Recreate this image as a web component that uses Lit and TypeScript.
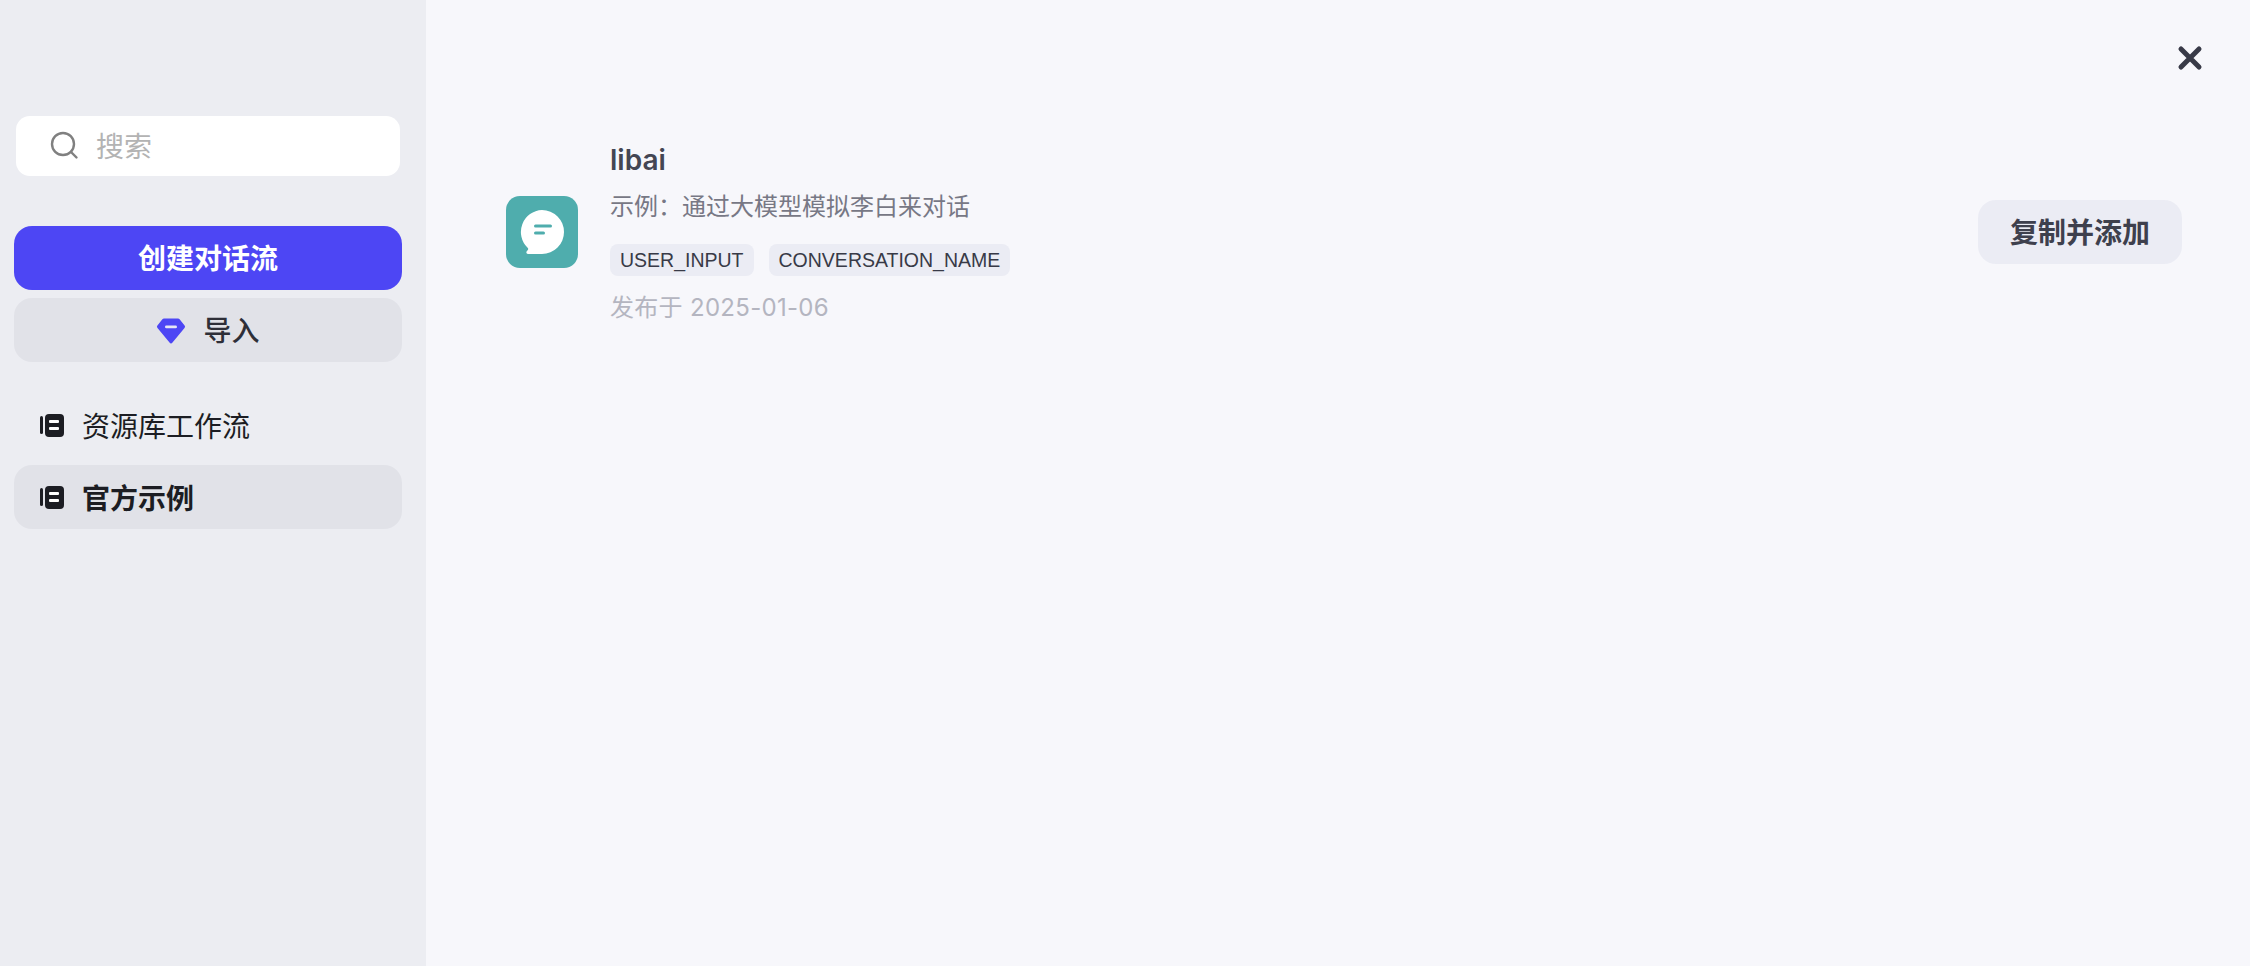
import { css, html, LitElement } from "lit";
import { customElement } from "lit/decorators.js";

const bookIcon = html`<svg class="nav-icon" width="26" height="26" viewBox="0 0 26 26">
  <rect x="1" y="4" width="3" height="18" rx="1.5" fill="#1c1d23"></rect>
  <rect x="6" y="2" width="19" height="23" rx="4" fill="#1c1d23"></rect>
  <rect x="10" y="8" width="10" height="3" rx="1" fill="#fff"></rect>
  <rect x="10" y="15" width="10" height="3" rx="1" fill="#fff"></rect>
</svg>`;

@customElement("app-root")
//@ts-ignore
class AppRoot extends LitElement {
    render() {
        return html`<div class="page">
      <aside class="sidebar">
        <div class="search">
          <svg width="30" height="30" viewBox="0 0 30 30" fill="none" stroke="#808080" stroke-width="2.4" stroke-linecap="round">
            <circle cx="14" cy="14" r="11"></circle>
            <path d="M22 22l5.5 5.5"></path>
          </svg>
          <span>搜索</span>
        </div>
        <button class="btn primary">创建对话流</button>
        <button class="btn import">
          <svg width="30" height="28" viewBox="0 0 30 28">
            <path d="M8 1.5h14a2 2 0 0 1 1.6.8l5 6.2a2 2 0 0 1-.1 2.6L16.5 25.6a2 2 0 0 1-3 0L1.500 11.100a2 2 0 0 1-.1-2.600l5-6.200A2 2 0 0 1 8 1.500z" fill="#4d46f4"></path>
            <rect x="9" y="8.500" width="12" height="2.800" rx="1.400" fill="#e6e6f5"></rect>
          </svg>
          <span>导入</span>
        </button>
        <nav class="nav">
          <div class="nav-item">${bookIcon}<span>资源库工作流</span></div>
          <div class="nav-item active">${bookIcon}<span>官方示例</span></div>
        </nav>
      </aside>
      <main class="main">
        <svg class="close" width="26" height="26" viewBox="0 0 26 26" fill="none" stroke="#383a47" stroke-width="5" stroke-linecap="round">
          <path d="M4 4l18 18M22 4L4 22"></path>
        </svg>
        <div class="row">
          <div class="app-icon">
            <svg width="44" height="44" viewBox="0 0 44 44">
              <path d="M22 0a22 22 0 1 1 0 44H8c-1.500 0-2.200-1.700-1.200-2.800l1-1.100c.6-.7.5-1.700-.2-2.300A22 22 0 0 1 22 0z" fill="#fff"></path>
              <rect x="14" y="14.500" width="18" height="3" rx="1.500" fill="#4fadad"></rect>
              <rect x="14" y="21.500" width="11" height="3" rx="1.500" fill="#4fadad"></rect>
            </svg>
          </div>
          <div class="info">
            <div class="title">libai</div>
            <div class="desc">示例：通过大模型模拟李白来对话</div>
            <div class="tags">
              <span class="tag">USER_INPUT</span>
              <span class="tag">CONVERSATION_NAME</span>
            </div>
            <div class="date">发布于 2025-01-06</div>
          </div>
          <button class="copy">复制并添加</button>
        </div>
      </main>
    </div>`;
    }

    static styles = css`
      :host {
        display: block;
        font-family: Inter, "Noto Sans CJK SC", sans-serif;
      }
      .page {
        display: flex;
        height: 966px;
        background: #f7f7fb;
      }
      .sidebar {
        width: 426px;
        flex: none;
        box-sizing: border-box;
        background: #ecedf2;
        padding: 116px 24px 0 14px;
        display: flex;
        flex-direction: column;
      }
      .search {
        display: flex;
        align-items: center;
        gap: 17px;
        height: 60px;
        box-sizing: border-box;
        margin: 0 2px 50px 2px;
        padding: 0 0 2px 33px;
        background: #fff;
        border-radius: 14px;
        font-size: 28px;
        color: #b3b3b3;
      }
      .btn {
        display: flex;
        align-items: center;
        justify-content: center;
        height: 64px;
        box-sizing: border-box;
        border: 0;
        border-radius: 18px;
        font-family: inherit;
        font-size: 28px;
        padding: 0 0 2px;
      }
      .primary {
        background: #4d46f4;
        color: #fff;
        font-weight: 700;
        margin-bottom: 8px;
      }
      .import {
        gap: 17px;
        background: #e1e2e8;
        color: #2e2f38;
        font-weight: 500;
      }
      .import svg {
        margin-top: 4px;
      }
      .nav {
        display: flex;
        flex-direction: column;
        gap: 8px;
        margin-top: 31px;
      }
      .nav-item {
        display: flex;
        align-items: center;
        gap: 17px;
        height: 64px;
        padding-left: 25px;
        border-radius: 18px;
        font-size: 28px;
        color: #1c1d23;
      }
      .nav-item.active {
        background: #e1e2e8;
        font-weight: 700;
      }
      .nav-icon {
        flex: none;
      }
      .main {
        flex: 1;
        position: relative;
        padding: 139px 68px 0 80px;
      }
      .close {
        position: absolute;
        top: 45px;
        right: 47px;
      }
      .row {
        display: flex;
        align-items: center;
        gap: 32px;
      }
      .app-icon {
        width: 72px;
        height: 72px;
        flex: none;
        display: flex;
        align-items: center;
        justify-content: center;
        background: #4fadad;
        border-radius: 14px;
      }
      .info {
        flex: 1;
        display: flex;
        flex-direction: column;
        align-items: flex-start;
        padding-top: 1px;
      }
      .title {
        font-size: 28px;
        line-height: 40px;
        font-weight: 600;
        color: #444653;
      }
      .desc {
        margin-top: 8px;
        font-size: 24px;
        line-height: 38px;
        color: #777885;
      }
      .tags {
        display: flex;
        gap: 15px;
        margin-top: 18px;
      }
      .tag {
        height: 32px;
        line-height: 32px;
        padding: 0 10px;
        background: #ebecf4;
        border-radius: 8px;
        font-family: "Liberation Sans", sans-serif;
        font-size: 19.5px;
        color: #383a47;
      }
      .date {
        margin-top: 15px;
        font-size: 24px;
        line-height: 34px;
        letter-spacing: 0.3px;
        color: #b4b5c0;
      }
      .copy {
        width: 204px;
        height: 64px;
        flex: none;
        border: 0;
        border-radius: 18px;
        background: #ebecf4;
        font-family: inherit;
        font-size: 28px;
        font-weight: 700;
        color: #3e404d;
        padding: 0 0 2px;
      }
    `;
}
